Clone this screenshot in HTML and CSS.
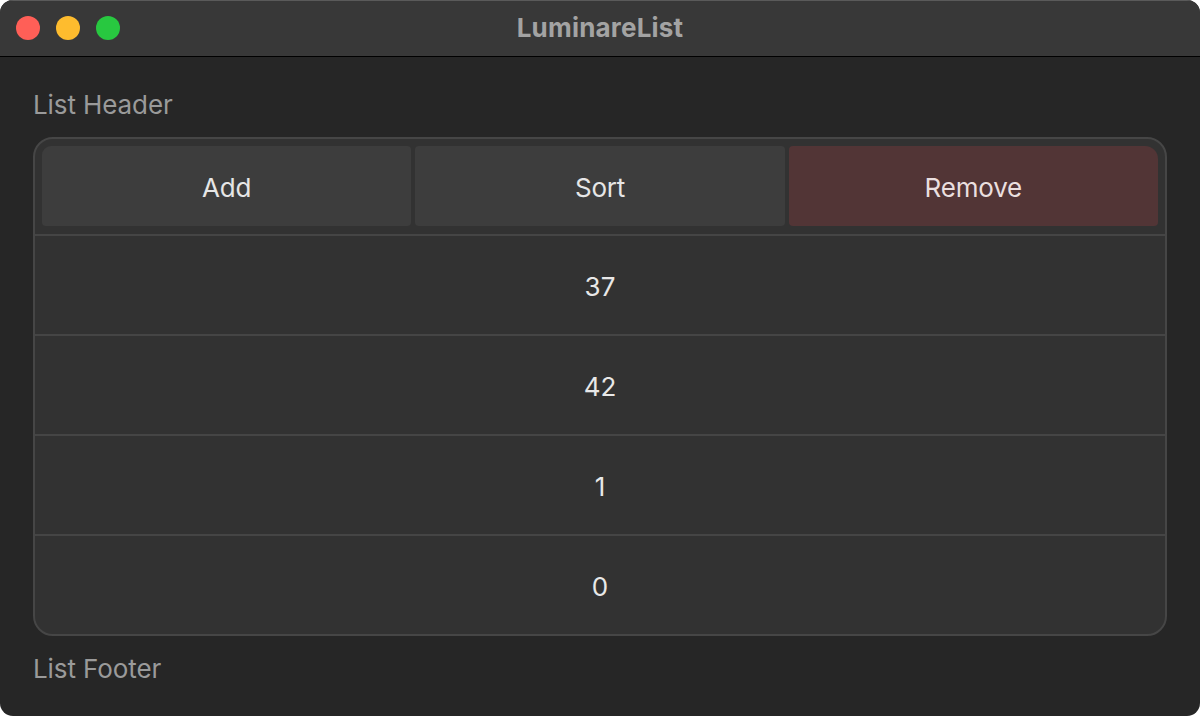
FILE: index.html
```html
<!DOCTYPE html>
<html lang="en">
<head>
<meta charset="utf-8">
<title>LuminareList</title>
<link rel="stylesheet" href="styles.css">
</head>
<body>
<div class="window">
  <header class="titlebar">
    <div class="lights">
      <span class="light red"></span>
      <span class="light yellow"></span>
      <span class="light green"></span>
    </div>
    <div class="title">LuminareList</div>
  </header>
  <main class="content">
    <div class="section-label header-label">List Header</div>
    <section class="card">
      <div class="actions">
        <button class="btn btn-first">Add</button>
        <button class="btn">Sort</button>
        <button class="btn btn-danger">Remove</button>
      </div>
      <div class="row">37</div>
      <div class="row">42</div>
      <div class="row">1</div>
      <div class="row">0</div>
    </section>
    <div class="section-label footer-label">List Footer</div>
  </main>
</div>
</body>
</html>
```
FILE: styles.css
```css
* { box-sizing: border-box; }
html, body {
  margin: 0;
  padding: 0;
  background: #ffffff;
}
body {
  font-family: Inter, "Liberation Sans", sans-serif;
  width: 1200px;
  height: 716px;
  overflow: hidden;
}
.window {
  width: 1200px;
  height: 716px;
  border-radius: 13px;
  overflow: hidden;
  background: #262626;
  display: flex;
  flex-direction: column;
}
.titlebar {
  position: relative;
  height: 57px;
  flex: none;
  background: #383838;
  border-bottom: 1px solid #000000;
  box-shadow: inset 0 1px 0 #5a5a5a;
  display: flex;
  align-items: center;
  justify-content: center;
}
.lights {
  position: absolute;
  left: 16px;
  top: 16px;
  display: flex;
  gap: 16px;
}
.light {
  width: 24px;
  height: 24px;
  border-radius: 50%;
  display: block;
}
.red { background: #ff5f57; }
.yellow { background: #febc2e; }
.green { background: #28c840; }
.title {
  font-size: 26px;
  font-weight: 700;
  color: #a3a3a3;
  letter-spacing: 0.2px;
  margin-top: -1px;
}
.content {
  padding: 0 33px;
  display: flex;
  flex-direction: column;
}
.section-label {
  font-size: 26px;
  line-height: 34px;
  color: #9a9a9a;
  letter-spacing: -0.1px;
}
.header-label {
  padding-top: 31px;
  margin-bottom: 15px;
}
.footer-label {
  margin-top: 16px;
}
.card {
  border: 2px solid #464646;
  border-radius: 20px;
  background: #323232;
  overflow: hidden;
  display: flex;
  flex-direction: column;
}
.actions {
  display: flex;
  gap: 4px;
  padding: 7px 7px 8px 7px;
  height: 95px;
}
.btn {
  flex: 1;
  height: 80px;
  border: none;
  margin: 0;
  padding: 2px 0 0 0;
  border-radius: 4px;
  background: #3d3d3d;
  color: #e6e6e6;
  font-family: inherit;
  font-size: 26px;
  letter-spacing: -0.2px;
}
.btn-first {
  border-top-left-radius: 9px;
}
.btn-danger {
  background: #523536;
  color: #eadfdf;
  border-top-right-radius: 13px;
}
.row {
  height: 100px;
  border-top: 2px solid #454545;
  padding-top: 3px;
  display: flex;
  align-items: center;
  justify-content: center;
  font-size: 26px;
  color: #e8e8e8;
}
.row:last-child {
  height: 100px;
}
```
